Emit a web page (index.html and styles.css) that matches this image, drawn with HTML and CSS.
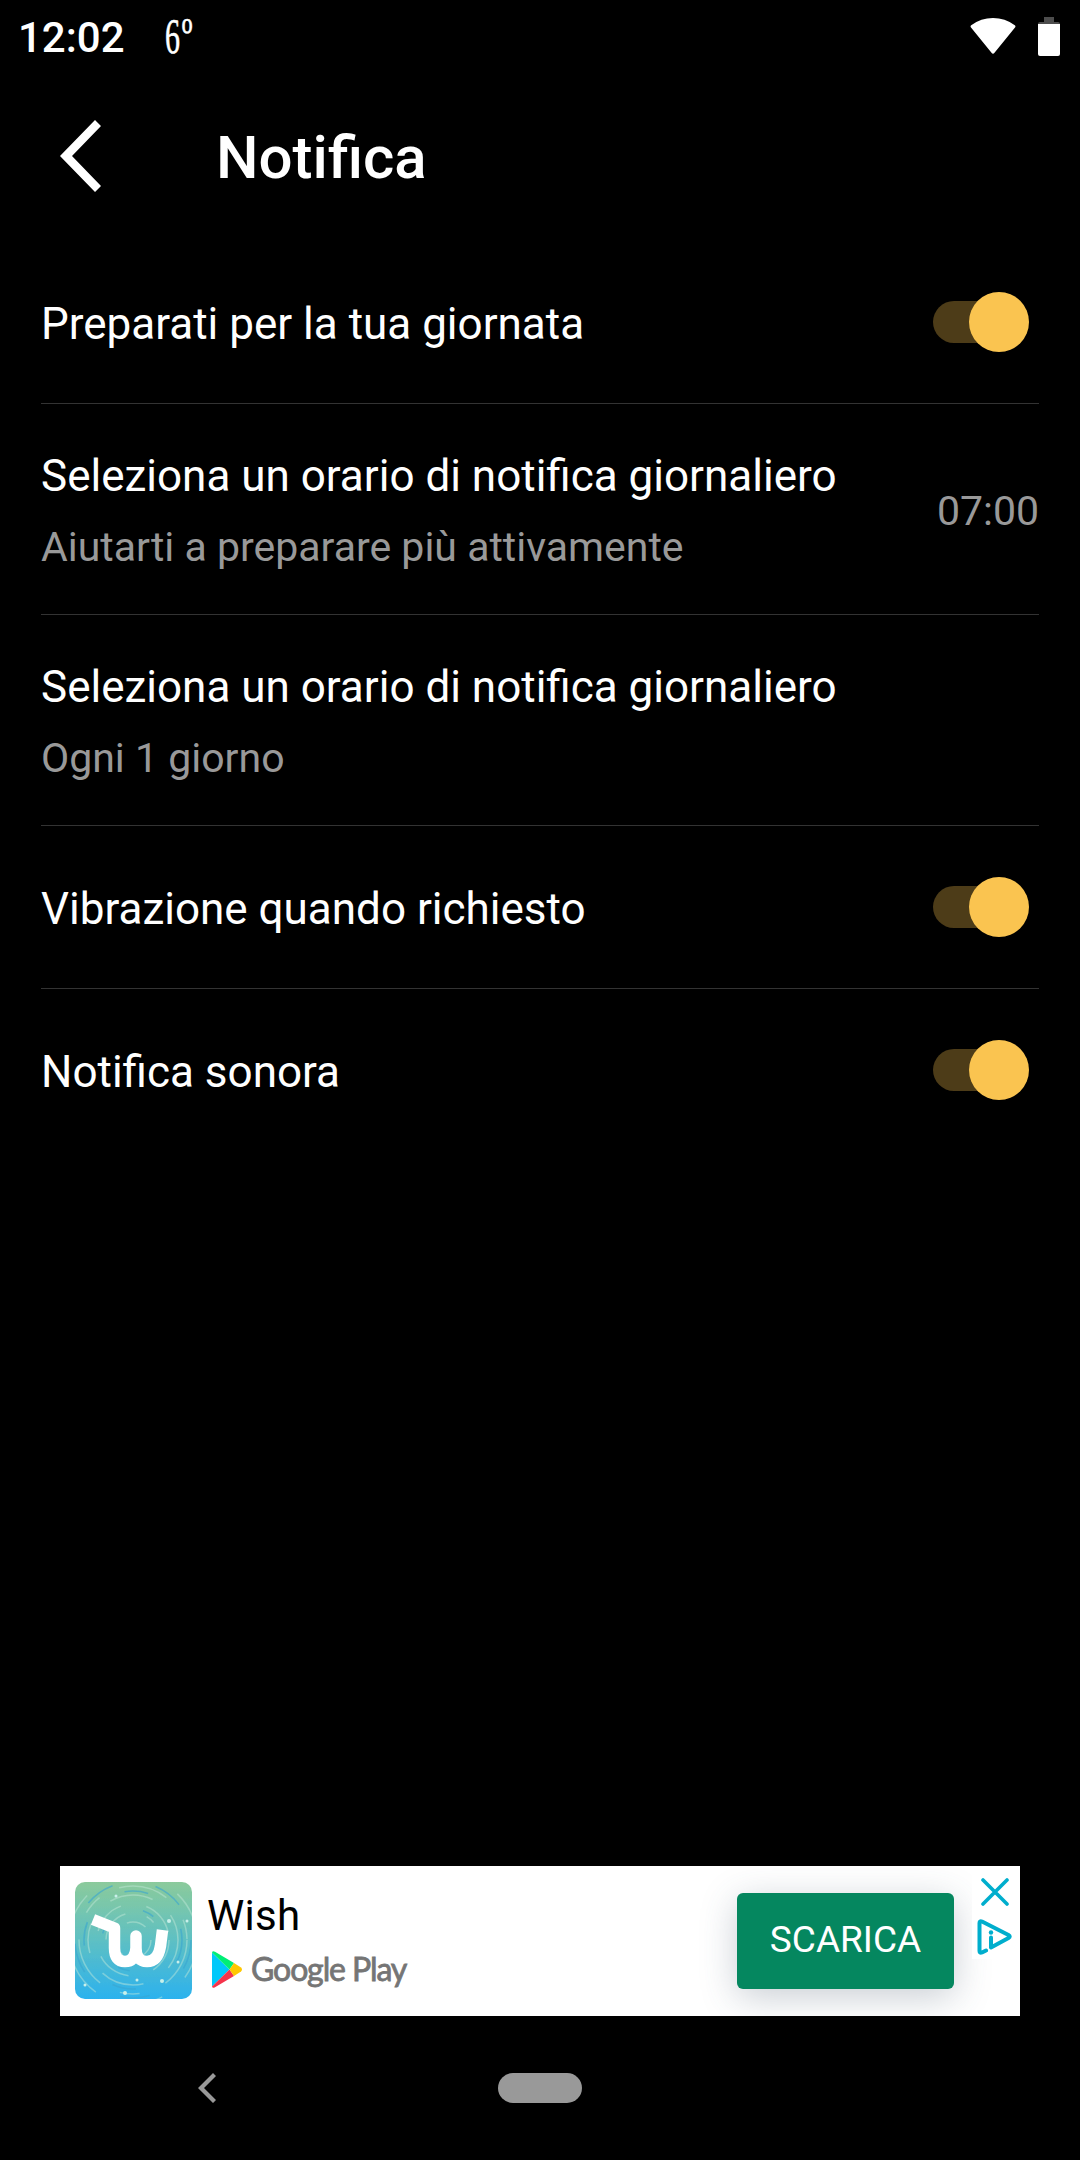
FILE: index.html
```html
<!DOCTYPE html>
<html lang="it">
<head>
    <meta charset="UTF-8">
    <meta name="viewport" content="width=device-width, initial-scale=1.0">
    <title>Notifica</title>
    <link rel="stylesheet" href="styles.css">
</head>
<body>
    <div class="status-bar">
        <span class="clock">12:02</span>
        <span class="temp">6<span class="degree">º</span></span>
        <svg class="wifi" width="46" height="36" viewBox="0 0 46 36">
            <path d="M1.2 7.2 Q0 8.3 1 9.5 L21.5 34.8 Q23 36.6 24.5 34.8 L45 9.5 Q46 8.3 44.8 7.2 Q35 0 23 0 Q11 0 1.2 7.2Z" fill="#fff"/>
        </svg>
        <svg class="battery" width="22" height="39" viewBox="0 0 22 39">
            <path d="M6 0h10v5h4q2 0 2 2v1H0V7q0-2 2-2h4z" fill="#4d4d4d"/>
            <path d="M0 7h22v30q0 2-2 2H2q-2 0-2-2z" fill="#fff"/>
        </svg>
    </div>

    <header class="header">
        <svg class="back" width="42" height="72" viewBox="0 0 42 72">
            <path d="M0 36 35 0l6 6-29 30 29 30-6 6z" fill="#fff"/>
        </svg>
        <h1>Notifica</h1>
    </header>

    <main class="settings">
        <div class="row">
            <p class="label">Preparati per la tua giornata</p>
            <div class="toggle"><div class="thumb"></div></div>
        </div>
        <div class="row tall">
            <div>
                <p class="label">Seleziona un orario di notifica giornaliero</p>
                <p class="sub">Aiutarti a preparare più attivamente</p>
            </div>
            <span class="time">07:00</span>
        </div>
        <div class="row tall">
            <div>
                <p class="label">Seleziona un orario di notifica giornaliero</p>
                <p class="sub">Ogni 1 giorno</p>
            </div>
        </div>
        <div class="row">
            <p class="label">Vibrazione quando richiesto</p>
            <div class="toggle"><div class="thumb"></div></div>
        </div>
        <div class="row">
            <p class="label">Notifica sonora</p>
            <div class="toggle"><div class="thumb"></div></div>
        </div>
    </main>

    <div class="ad">
        <svg class="app-icon" width="117" height="117" viewBox="0 0 117 117">
            <defs>
                <linearGradient id="sky" x1="0" y1="0" x2="0" y2="1">
                    <stop offset="0" stop-color="#8ccb9c"/>
                    <stop offset="0.5" stop-color="#5fc0c4"/>
                    <stop offset="1" stop-color="#2db2ee"/>
                </linearGradient>
            </defs>
            <rect width="117" height="117" fill="url(#sky)"/>
            <g fill="none" stroke="#c5ead9" stroke-width="1.5" opacity="0.45">
                <circle cx="58" cy="58" r="18" stroke-dasharray="20 19"/>
                <circle cx="58" cy="58" r="27" stroke-dasharray="34 22 9 20"/>
                <circle cx="58" cy="58" r="36" stroke-dasharray="35 26"/>
                <circle cx="58" cy="58" r="45" stroke-dasharray="30 30 44 24"/>
                <circle cx="58" cy="58" r="54" stroke-dasharray="50 28 20 22"/>
                <circle cx="58" cy="58" r="64" stroke-dasharray="40 30"/>
            </g>
            <g fill="none" stroke="#3aa5d0" stroke-width="1.6" opacity="0.6">
                <circle cx="58" cy="58" r="31" stroke-dasharray="12 40"/>
                <circle cx="58" cy="58" r="49" stroke-dasharray="24 50"/>
                <circle cx="58" cy="58" r="58" stroke-dasharray="30 44"/>
            </g>
            <g fill="#c9f0ea">
                <circle cx="41" cy="14" r="1.500"/>
                <circle cx="94" cy="39" r="2"/>
                <circle cx="112" cy="39" r="1.500"/>
                <circle cx="10" cy="103" r="1.500"/>
                <circle cx="50" cy="111" r="2"/>
                <circle cx="87" cy="99" r="2"/>
                <circle cx="62" cy="98" r="1.500"/>
                <circle cx="103" cy="80" r="1.500"/>
            </g>
            <path d="M18 37.500 39.500 46V66Q39.500 79.500 50 79.500 60 79.500 61 66V54 66Q61 79.500 72 79.500 83 79.500 85.500 64L87.500 48" fill="none" stroke="#fff" stroke-width="11.500" stroke-linejoin="round"/>
        </svg>
        <div class="ad-text">
            <p class="ad-title">Wish</p>
            <div class="store">
                <svg width="30" height="37" viewBox="0 0 30 37">
                    <path d="M0 1.5V35.5L17.500 18.500z" fill="#00c8fa"/>
                    <path d="M0 1.500Q.5-.5 3 .8L22 12 17.500 18.500z" fill="#00ee76"/>
                    <path d="M0 35.500Q.5 37.500 3 36.200L22 25 17.500 18.500z" fill="#f5334b"/>
                    <path d="M22 12l7 4.500q2 2 0 4L22 25l-4.500-6.500z" fill="#ffc800"/>
                </svg>
                <span class="store-name">Google Play</span>
            </div>
        </div>
        <div class="download">SCARICA</div>
        <div class="ad-tools">
            <svg width="28" height="28" viewBox="0 0 28 28">
                <path d="M2 2 26 26M26 2 2 26" stroke="#00aecd" stroke-width="3.600" stroke-linecap="round"/>
            </svg>
            <svg width="36" height="36" viewBox="0 0 36 36">
                <path d="M9 31.500 5 33.500Q2.500 34.500 2.500 32V4Q2.500 1.500 5 2.500L31.500 16Q34 17.500 31.500 19L14 28.500V18.500" fill="none" stroke="#00aecd" stroke-width="4" stroke-linecap="round" stroke-linejoin="round"/>
                <circle cx="14" cy="13.500" r="2.200" fill="#00aecd"/>
            </svg>
        </div>
    </div>

    <nav class="nav-bar">
        <svg width="18" height="30" viewBox="0 0 18 30">
            <path d="M0 15 15 0l3 3L6 15l12 12-3 3z" fill="#999"/>
        </svg>
        <div class="pill"></div>
    </nav>
</body>
</html>
```
FILE: styles.css
```css
* {
    margin: 0;
    padding: 0;
    box-sizing: border-box;
}
body {
    height: 2160px;
    display: flex;
    flex-direction: column;
    background-color: #000;
    color: #fff;
    font-family: Roboto, sans-serif;
}
.status-bar {
    height: 72px;
    padding: 0 20px 0 18px;
    display: flex;
    align-items: center;
}
.clock {
    font-size: 42px;
    font-weight: 500;
    line-height: 72px;
    padding-top: 3px;
}
.temp {
    font-family: "Liberation Serif", serif;
    font-size: 50px;
    line-height: 72px;
    margin-left: 40px;
    transform: scaleX(0.6);
    transform-origin: left;
    -webkit-text-stroke: 0.6px #fff;
}
.degree {
    display: inline-block;
    font-size: 50px;
    line-height: 0;
    margin-left: 3px;
    transform: scaleX(1.15);
    transform-origin: left;
}
.wifi {
    margin-left: auto;
}
.battery {
    margin-left: 22px;
}
.header {
    height: 169px;
    padding: 48px 0 0 60px;
    display: flex;
    align-items: flex-start;
}
.header h1 {
    margin-left: 114px;
    font-size: 60px;
    font-weight: 500;
    line-height: 76px;
}
.settings {
    padding: 0 41px;
}
.row {
    height: 163px;
    border-bottom: 1px solid #333;
    display: flex;
    justify-content: space-between;
    align-items: center;
}
.row:last-child {
    height: 162px;
    border-bottom: none;
}
.tall {
    height: 211px;
}
.label {
    padding-top: 4px;
    font-size: 44px;
    line-height: 60px;
}
.sub {
    margin: 13px 0 1px;
    font-size: 41px;
    line-height: 56px;
    color: #999;
}
.time {
    padding-top: 3px;
    font-size: 41px;
    color: #999;
}
.toggle {
    width: 86px;
    height: 42px;
    margin-right: 20.5px;
    margin-bottom: 1px;
    border-radius: 21px;
    background-color: #4d3c18;
    display: flex;
    align-items: center;
}
.thumb {
    flex: none;
    width: 60px;
    height: 60px;
    margin-left: 36px;
    border-radius: 50%;
    background-color: #fac450;
}
.ad {
    width: 960px;
    height: 150px;
    margin: auto auto 0;
    padding-left: 15px;
    display: flex;
    align-items: center;
    background-color: #fff;
    color: #000;
    overflow: hidden;
}
.app-icon {
    margin-bottom: 2px;
    border-radius: 10px;
}
.ad-text {
    margin-left: 15px;
    padding-bottom: 3px;
}
.ad-title {
    font-size: 42px;
    line-height: 48px;
    letter-spacing: 0.3px;
}
.store {
    margin-top: 11px;
    padding-left: 5px;
    display: flex;
    align-items: center;
}
.store-name {
    margin-left: 9px;
    font-family: Lato, sans-serif;
    font-size: 32px;
    line-height: 36px;
    letter-spacing: -1.1px;
    color: #757575;
    -webkit-text-stroke: 0.8px #757575;
}
.download {
    width: 217px;
    height: 96px;
    margin-left: auto;
    border-radius: 6px;
    background-color: #05875f;
    box-shadow: 0 8px 36px rgba(60, 80, 100, 0.28);
    color: #fff;
    font-size: 37px;
    line-height: 93px;
    text-align: center;
}
.ad-tools {
    align-self: flex-start;
    width: 48px;
    height: 93px;
    margin-left: 18px;
    padding: 12px 3px 0 0;
    display: flex;
    flex-direction: column;
    align-items: center;
    gap: 13px;
    background-color: #fff;
    z-index: 1;
}
.nav-bar {
    height: 144px;
    padding-left: 198px;
    display: flex;
    align-items: center;
    gap: 282px;
}
.pill {
    width: 84px;
    height: 30px;
    border-radius: 15px;
    background-color: #999;
}
```
